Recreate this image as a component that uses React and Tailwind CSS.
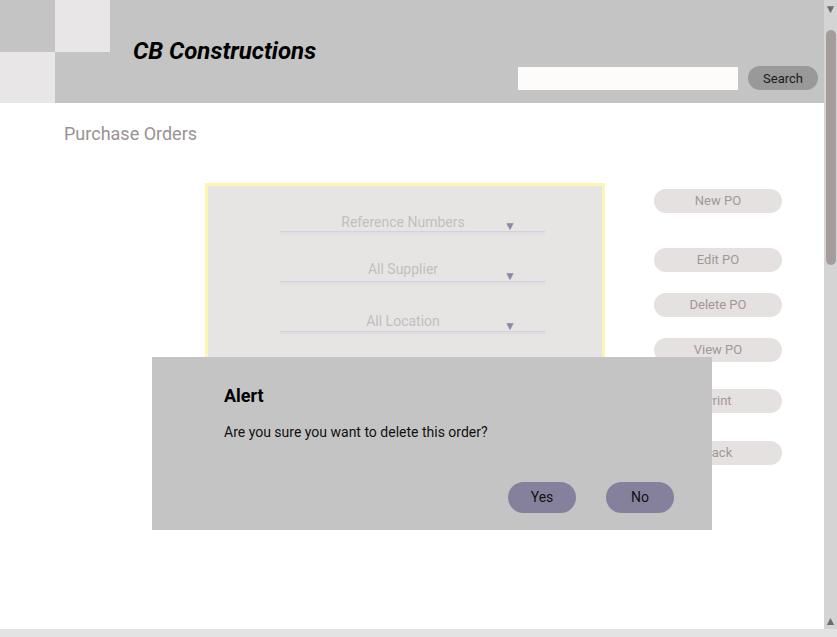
import React from "react";

const roboto = { fontFamily: "Roboto, 'Noto Sans', sans-serif" };

function Select({ label, mt, textPt }) {
  return (
    <div className={`relative w-[265px] ${mt}`}>
      <div className={`h-[38px] border-b border-[#d4cfe3] flex items-start justify-center pr-[19px] ${textPt}`}>
        <span className="text-[14px] text-[#c4bebe] leading-[18px]">{label}</span>
      </div>
      <span className="absolute right-[29px] bottom-[4px] text-[12px] leading-none text-[#8f86ab]">▼</span>
      <div className="h-[4px] bg-gradient-to-b from-[#dedcdc] to-transparent" />
    </div>
  );
}

function SideBtn({ label, mt }) {
  return (
    <div className={`w-[128px] h-[24px] rounded-full bg-[#e5e1e1] flex items-center justify-center text-[13px] text-[#a09898] ${mt}`}>
      {label}
    </div>
  );
}

export default function App() {
  return (
    <div className="relative w-[837px] h-[637px] overflow-hidden bg-white" style={roboto}>
      <div className="flex h-[629px]">
        <div className="flex-1 flex flex-col">
          <header className="h-[103px] bg-[#c4c4c4] flex">
            <div className="grid grid-cols-[55px_55px] grid-rows-[52px_51px]">
              <div />
              <div className="bg-[#e8e6e6]" />
              <div className="bg-[#e8e6e6]" />
              <div />
            </div>
            <div className="flex-1 relative">
              <h1
                className="absolute left-[23px] top-[36px] text-[24px] font-bold italic text-black leading-[30px]"
                style={{ fontFamily: "Roboto, sans-serif" }}
              >
                CB Constructions
              </h1>
              <div className="absolute left-[408px] top-[66px] flex items-center gap-[10px]">
                <div className="w-[220px] h-[23px] bg-[#fdfcfb] mt-[1px]" />
                <div className="w-[70px] h-[24px] rounded-full bg-[#999999] flex items-center justify-center text-[13px] text-[#1a1a1a] pt-[1px]">
                  Search
                </div>
              </div>
            </div>
          </header>
          <div className="flex-1 flex flex-col">
            <div className="pl-[64px] pt-[20px] text-[18px] text-[#9a9292] leading-[22px]">Purchase Orders</div>
            <div className="flex mt-[38px]">
              <div className="ml-[205px] w-[400px] h-[310px] border-[3px] border-[#fff5b3] bg-[#e7e5e4] flex flex-col items-start pl-[72px]">
                <Select label="Reference Numbers" mt="mt-[8px]" textPt="pt-[19px]" />
                <Select label="All Supplier" mt="mt-[8px]" textPt="pt-[16px]" />
                <Select label="All Location" mt="mt-[8px]" textPt="pt-[18px]" />
              </div>
              <div className="ml-[49px] flex flex-col mt-[6px]">
                <SideBtn label="New PO" mt="" />
                <SideBtn label="Edit PO" mt="mt-[35px]" />
                <SideBtn label="Delete PO" mt="mt-[21px]" />
                <SideBtn label="View PO" mt="mt-[21px]" />
                <SideBtn label="Print" mt="mt-[27px]" />
                <SideBtn label="Back" mt="mt-[28px]" />
              </div>
            </div>
          </div>
        </div>
        <div className="w-[13px] bg-[#d5d4d4] flex flex-col items-center relative">
          <span className="text-[12px] leading-none text-[#6e6e6e] mt-[3px]">▼</span>
          <div className="w-[10px] h-[235px] rounded-full bg-[#a59c9c] mt-[15px]" />
          <div className="flex-1" />
          <span className="text-[12px] leading-none text-[#6e6e6e] mb-[2px]">▲</span>
        </div>
      </div>
      <div className="h-[8px] bg-[#e3e3e3]" />

      <div className="absolute left-[152px] top-[357px] w-[560px] h-[173px] bg-[#c4c4c4] pl-[72px] pt-[28px] flex flex-col">
        <div className="text-[18px] font-bold text-black leading-[22px]">Alert</div>
        <div className="text-[14px] text-[#111] mt-[16px] leading-[18px]">Are you sure you want to delete this order?</div>
        <div className="flex justify-end gap-[30px] pr-[38px] mt-[41px]">
          <div className="w-[68px] h-[31px] rounded-full bg-[#85819c] flex items-center justify-center text-[14px] text-[#111]">Yes</div>
          <div className="w-[68px] h-[31px] rounded-full bg-[#85819c] flex items-center justify-center text-[14px] text-[#111]">No</div>
        </div>
      </div>
    </div>
  );
}
